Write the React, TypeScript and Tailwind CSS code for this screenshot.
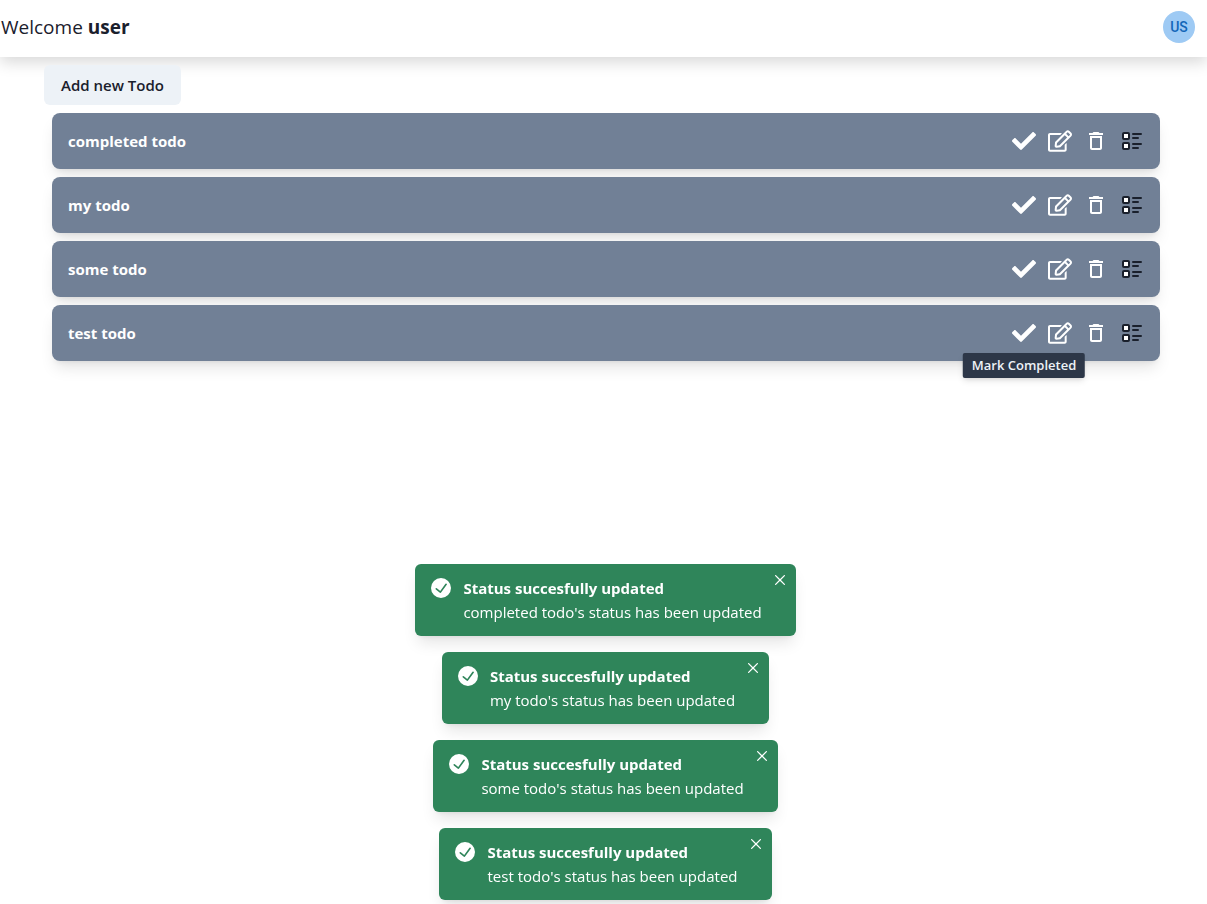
import type { ReactNode } from "react";
import { FaCheck, FaRegEdit } from "react-icons/fa";
import { MdDeleteOutline } from "react-icons/md";

const todos = ["completed todo", "my todo", "some todo", "test todo"];

function DetailsIcon() {
  return (
    <svg
      viewBox="0 0 24 24"
      className="size-6"
      fill="none"
      stroke="currentColor"
      strokeWidth="2"
      strokeLinecap="round"
      strokeLinejoin="round"
      aria-hidden="true"
    >
      <path d="M13 5h8M13 9h5M13 15h8M13 19h5" />
      <rect x="3" y="4" width="6" height="6" rx="1" fill="#fff" />
      <rect x="3" y="14" width="6" height="6" rx="1" fill="#fff" />
    </svg>
  );
}

function SuccessIcon() {
  return (
    <svg viewBox="0 0 24 24" className="mt-0.5 size-5 shrink-0" fill="currentColor" aria-hidden="true">
      <path d="M12,0A12,12,0,1,0,24,12,12.014,12.014,0,0,0,12,0Zm6.927,8.2-6.845,9.289a1.011,1.011,0,0,1-1.43.188L5.764,13.769a1,1,0,1,1,1.25-1.562l4.076,3.261,6.227-8.451A1,1,0,1,1,18.927,8.2Z" />
    </svg>
  );
}

function CloseIcon() {
  return (
    <svg viewBox="0 0 24 24" className="size-[10px]" fill="currentColor" aria-hidden="true">
      <path d="M.439,21.44a1.5,1.5,0,0,0,2.122,2.121L11.823,14.3a.25.25,0,0,1,.354,0l9.262,9.263a1.5,1.5,0,1,0,2.122-2.121L14.3,12.177a.25.25,0,0,1,0-.354l9.263-9.262A1.5,1.5,0,0,0,21.439.44L12.177,9.7a.25.25,0,0,1-.354,0L2.561.44A1.5,1.5,0,0,0,.439,2.561L9.7,11.823a.25.25,0,0,1,0,.354Z" />
    </svg>
  );
}

function IconButton({ label, children }: { label: string; children: ReactNode }) {
  return (
    <button type="button" aria-label={label} className="flex size-6 items-center justify-center">
      {children}
    </button>
  );
}

function TodoRow({ title, showTooltip }: { title: string; showTooltip: boolean }) {
  return (
    <li className="flex h-14 items-center justify-between rounded-lg bg-[#718096] px-4 text-white shadow-lg">
      <span className="text-[15px] font-bold">{title}</span>
      <div className="flex items-center gap-3">
        <div className="relative">
          <IconButton label="Mark Completed">
            <FaCheck className="size-6" />
          </IconButton>
          {showTooltip && (
            <div
              role="tooltip"
              className="absolute top-full left-1/2 z-10 mt-2 -translate-x-1/2 rounded-xs bg-[#2d3748] px-[9px] py-0.5 text-[13px] leading-[21px] font-semibold whitespace-nowrap text-[#edf2f7] shadow-md"
            >
              Mark Completed
            </div>
          )}
        </div>
        <IconButton label="Edit">
          <FaRegEdit className="size-6" />
        </IconButton>
        <IconButton label="Delete">
          <MdDeleteOutline className="size-6" />
        </IconButton>
        <div className="flex text-[#1a202c]">
          <IconButton label="Details">
            <DetailsIcon />
          </IconButton>
        </div>
      </div>
    </li>
  );
}

function Toast({ title }: { title: string }) {
  return (
    <div role="status" className="relative flex gap-3 rounded-md bg-[#2f855a] py-3 pr-[34px] pl-4 text-white shadow-lg">
      <SuccessIcon />
      <div className="text-[15px] leading-6">
        <p className="font-bold">Status succesfully updated</p>
        <p>{title}'s status has been updated</p>
      </div>
      <button
        type="button"
        aria-label="Close"
        className="absolute top-1 right-1 flex size-6 items-center justify-center"
      >
        <CloseIcon />
      </button>
    </div>
  );
}

export default function App() {
  return (
    <div className="min-h-screen bg-white font-['Open_Sans','Noto_Sans',sans-serif] text-[#1a202c]">
      <header className="flex h-[57px] items-center justify-between pr-3 pb-[3px] pl-px shadow-[0_5px_15px_rgba(0,0,0,0.16)]">
        <h1 className="text-[19px] font-normal">
          Welcome <strong className="font-bold">user</strong>
        </h1>
        <span className="flex size-8 items-center justify-center rounded-full bg-[#9ecaf4] font-[Roboto,sans-serif] text-[14px] font-medium text-[#1366b8]">
          US
        </span>
      </header>
      <main className="pt-2 pr-[39px] pl-11">
        <button type="button" className="h-10 rounded-md bg-[#edf2f7] px-[17px] text-[15px] font-semibold">
          Add new Todo
        </button>
        <ul className="flex flex-col gap-2 p-2">
          {todos.map((title, index) => (
            <TodoRow key={title} title={title} showTooltip={index === todos.length - 1} />
          ))}
        </ul>
      </main>
      <div className="fixed inset-x-0 bottom-0 flex flex-col items-center gap-4 pb-1 pl-1">
        {todos.map((title) => (
          <Toast key={title} title={title} />
        ))}
      </div>
    </div>
  );
}
